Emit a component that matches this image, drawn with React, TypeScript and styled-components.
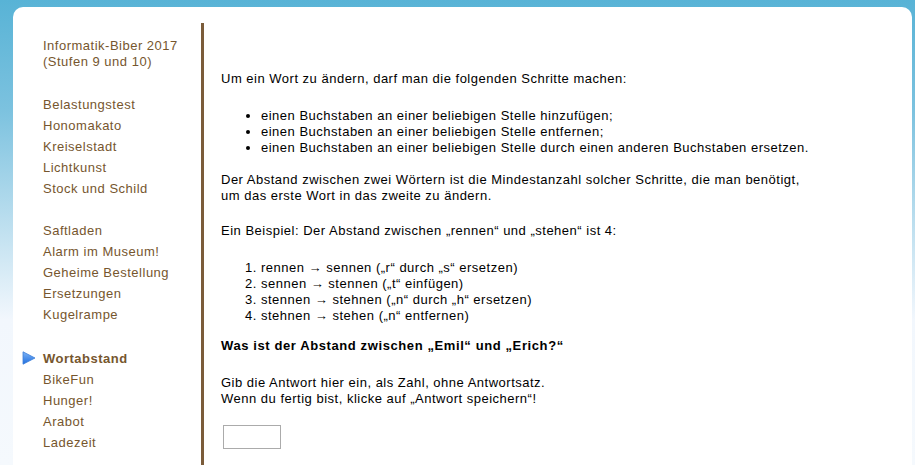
import styled, { createGlobalStyle } from 'styled-components';

const GlobalStyle = createGlobalStyle`
  html, body {
    margin: 0;
    padding: 0;
  }
  body {
    min-height: 100vh;
    background: linear-gradient(180deg, #58b3d6 0px, #7cc2df 110px, #a9d6ea 190px, #dcedf7 280px, #f2f7fd 320px, #f5f9fd 465px);
    font-family: 'Liberation Sans', Arial, sans-serif;
    font-size: 13px;
    letter-spacing: 0.5px;
  }
`;

const Page = styled.div`
  padding: 7px 3px 0 13px;
  min-height: 100vh;
  box-sizing: border-box;
  display: flex;
`;

const Panel = styled.div`
  flex: 1;
  display: flex;
  background: #ffffff;
  border-radius: 10px 10px 0 0;
`;

const Sidebar = styled.nav`
  width: 158px;
  flex-shrink: 0;
  padding: 31px 0 0 30px;
  color: #76562e;
`;

const Title = styled.div`
  line-height: 16px;
`;

const MenuGroup = styled.ul<{ $gap: number }>`
  list-style: none;
  margin: ${(p) => p.$gap}px 0 0 0;
  padding: 0;
`;

const MenuItem = styled.li<{ $active?: boolean }>`
  position: relative;
  line-height: 21px;
  font-weight: ${(p) => (p.$active ? 'bold' : 'normal')};
`;

const Marker = styled.svg`
  position: absolute;
  left: -21px;
  top: 3px;
`;

const Divider = styled.div`
  width: 3px;
  flex-shrink: 0;
  margin-top: 16px;
  background: #7b5c3a;
`;

const Content = styled.main`
  padding: 64px 20px 0 17px;
  color: #000;
`;

const Para = styled.p<{ $top: number }>`
  margin: ${(p) => p.$top}px 0 0 0;
  line-height: 16px;
`;

const Bold = styled(Para)`
  font-weight: bold;
  letter-spacing: 0.6px;
`;

const BulletList = styled.ul<{ $top: number }>`
  margin: ${(p) => p.$top}px 0 0 0;
  padding-left: 40px;
  line-height: 16px;
`;

const NumberList = styled.ol<{ $top: number }>`
  margin: ${(p) => p.$top}px 0 0 0;
  padding-left: 40px;
  line-height: 16px;
`;

const AnswerInput = styled.input`
  display: block;
  margin: 18px 0 0 2px;
  width: 58px;
  height: 24px;
  box-sizing: border-box;
  border: 1px solid #ababab;
  padding: 2px 4px;
  font-family: 'Liberation Sans', Arial, sans-serif;
  font-size: 13px;
`;

const groups = [
  ['Belastungstest', 'Honomakato', 'Kreiselstadt', 'Lichtkunst', 'Stock und Schild'],
  ['Saftladen', 'Alarm im Museum!', 'Geheime Bestellung', 'Ersetzungen', 'Kugelrampe'],
  ['Wortabstand', 'BikeFun', 'Hunger!', 'Arabot', 'Ladezeit'],
];
const gaps = [24, 21, 23];

function ActiveMarker() {
  return (
    <Marker width='14' height='14' viewBox='0 0 14 14'>
      <defs>
        <linearGradient id='mk' x1='0' y1='0' x2='0' y2='1'>
          <stop offset='0' stopColor='#7fb4f5' />
          <stop offset='1' stopColor='#1f6fe0' />
        </linearGradient>
      </defs>
      <path d='M1 0.8 L13 7 L1 13.2 Z' fill='url(#mk)' stroke='#3d7fd8' strokeWidth='0.8' />
    </Marker>
  );
}

export default function App() {
  return (
    <>
      <GlobalStyle />
      <Page>
        <Panel>
          <Sidebar>
            <Title>
              Informatik-Biber 2017
              <br />
              (Stufen 9 und 10)
            </Title>
            {groups.map((g, i) => (
              <MenuGroup key={i} $gap={gaps[i]}>
                {g.map((name) => (
                  <MenuItem key={name} $active={name === 'Wortabstand'}>
                    {name === 'Wortabstand' && <ActiveMarker />}
                    {name}
                  </MenuItem>
                ))}
              </MenuGroup>
            ))}
          </Sidebar>
          <Divider />
          <Content>
            <Para $top={0}>Um ein Wort zu ändern, darf man die folgenden Schritte machen:</Para>
            <BulletList $top={21}>
              <li>einen Buchstaben an einer beliebigen Stelle hinzufügen;</li>
              <li>einen Buchstaben an einer beliebigen Stelle entfernen;</li>
              <li>einen Buchstaben an einer beliebigen Stelle durch einen anderen Buchstaben ersetzen.</li>
            </BulletList>
            <Para $top={16}>
              Der Abstand zwischen zwei Wörtern ist die Mindestanzahl solcher Schritte, die man benötigt,
              <br />
              um das erste Wort in das zweite zu ändern.
            </Para>
            <Para $top={19}>Ein Beispiel: Der Abstand zwischen „rennen“ und „stehen“ ist 4:</Para>
            <NumberList $top={21}>
              <li>rennen → sennen („r“ durch „s“ ersetzen)</li>
              <li>sennen → stennen („t“ einfügen)</li>
              <li>stennen → stehnen („n“ durch „h“ ersetzen)</li>
              <li>stehnen → stehen („n“ entfernen)</li>
            </NumberList>
            <Bold $top={14}>Was ist der Abstand zwischen „Emil“ und „Erich?“</Bold>
            <Para $top={21}>
              Gib die Antwort hier ein, als Zahl, ohne Antwortsatz.
              <br />
              Wenn du fertig bist, klicke auf „Antwort speichern“!
            </Para>
            <AnswerInput type='text' />
          </Content>
        </Panel>
      </Page>
    </>
  );
}
